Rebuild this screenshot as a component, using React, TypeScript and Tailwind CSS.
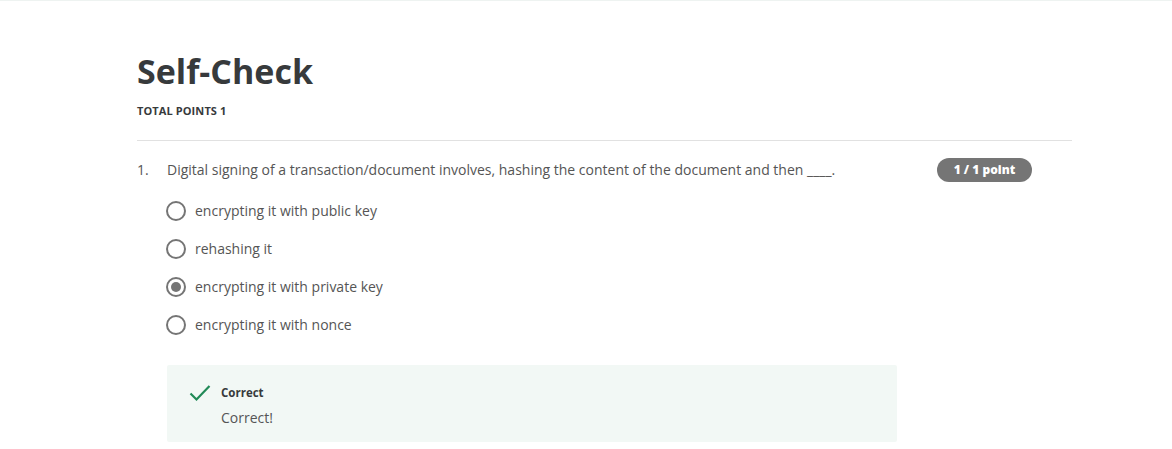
import React from 'react';

const options = [
  { label: 'encrypting it with public key', checked: false },
  { label: 'rehashing it', checked: false },
  { label: 'encrypting it with private key', checked: true },
  { label: 'encrypting it with nonce', checked: false },
];

function Radio({ checked }: { checked: boolean }) {
  return (
    <span className="flex h-5 w-5 shrink-0 items-center justify-center rounded-full border-2 border-[#757575] bg-white">
      {checked && <span className="h-[10px] w-[10px] rounded-full bg-[#757575]" />}
    </span>
  );
}

export default function App() {
  return (
    <div
      className="min-h-screen border-t border-[#eef3f1] bg-white text-[#373a3c]"
      style={{ fontFamily: '"Open Sans", "Liberation Sans", sans-serif' }}
    >
      <div className="ml-[137px] w-[935px] pt-[46px]">
        {/* Header */}
        <h1 className="text-[34px] font-bold leading-[48px] text-[#373a3c]">Self-Check</h1>
        <p className="mt-[8px] text-[11px] font-bold uppercase leading-4 tracking-[0.1px]">
          Total points 1
        </p>
        <div className="mt-[21px] h-px bg-[#e1e1e1]" />

        {/* Question */}
        <div className="mt-[18px] flex items-start pr-10">
          <span className="w-[30px] text-[14px] leading-[21px] text-[#555]">1.</span>
          <p className="flex-1 text-[14px] leading-[21px] text-[#555]">
            Digital signing of a transaction/document involves, hashing the content of the document and then ____.
          </p>
          <span className="-mt-[1px] flex h-6 w-[95px] items-center justify-center rounded-full bg-[#757575] text-[12px] font-extrabold text-white">
            1 / 1 point
          </span>
        </div>

        <div className="ml-[29px] mt-[19px] flex flex-col gap-[18px]">
          {options.map((o) => (
            <label key={o.label} className="flex items-center gap-[9px]">
              <Radio checked={o.checked} />
              <span className="text-[14px] leading-5 text-[#555]">{o.label}</span>
            </label>
          ))}
        </div>

        {/* Feedback */}
        <div className="ml-[30px] mt-[30px] flex w-[730px] gap-[10px] rounded-[2px] bg-[#f2f8f5] pb-[14px] pl-[22px] pt-[18px]">
          <svg width="22" height="18" viewBox="0 0 22 18" className="mt-[1px]">
            <path d="M1.5 9.5 L7.5 15.5 L20.5 2" fill="none" stroke="#218a57" strokeWidth="2.2" />
          </svg>
          <div>
            <p className="text-[11.5px] font-bold leading-5 text-[#373a3c]">Correct</p>
            <p className="mt-[5px] text-[14px] leading-5 text-[#555]">Correct!</p>
          </div>
        </div>
      </div>
    </div>
  );
}
